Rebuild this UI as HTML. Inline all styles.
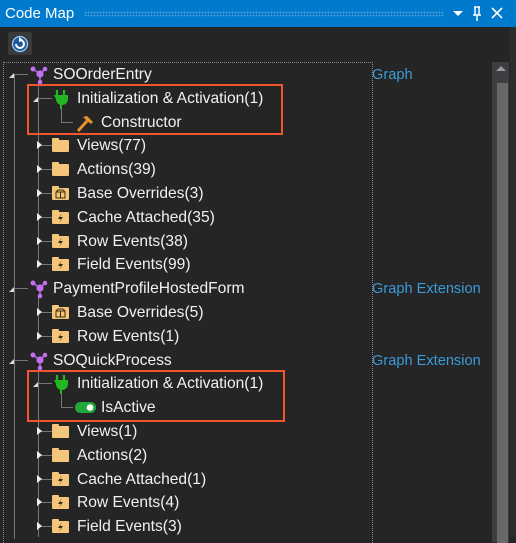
<!DOCTYPE html><html><head><style>
body{margin:0;width:516px;height:537px;background:#252526;overflow:hidden;font-family:"Liberation Sans",sans-serif;font-size:15.6px;color:#f1f1f1;position:relative}
.a{position:absolute}
.t{position:absolute;white-space:nowrap;line-height:18px}
.r{color:#3a9bd6;font-size:14.6px}
.box{position:absolute;border:2px solid #f0552f;box-sizing:border-box}
.vl{position:absolute;width:1px;background:#777}
.hl{position:absolute;height:1px;background:#777}
.tri{position:absolute;width:0;height:0;border-top:4px solid transparent;border-bottom:4px solid transparent;border-left:5px solid #eee}
.exp{position:absolute;width:0;height:0;border-left:5px solid transparent;border-bottom:5px solid #ddd}
.fold{position:absolute;width:17px;height:12px;background:#f5c67a;border-radius:1px}
.fold:before{content:"";position:absolute;left:0;top:-2px;width:7px;height:3px;background:#f5c67a;border-radius:1px 1px 0 0}
</style></head><body>
<div class="a" style="left:0;top:0;width:516px;height:27px;background:#007acc"></div>
<div class="t" style="left:5px;top:5px;font-size:15px;color:#fff">Code Map</div>
<div class="a" style="left:84px;top:11px;width:360px;height:6px;background-image:radial-gradient(#4a9ad8 1px,transparent 1px);background-size:3px 3px"></div>
<div class="a" style="left:453px;top:11px;border-left:5px solid transparent;border-right:5px solid transparent;border-top:5px solid #fff"></div>
<svg class="a" style="left:470px;top:6px" width="14" height="16"><path d="M4 1h6M5 1v8M9 1v8M3 9h8M7 9v6" stroke="#fff" stroke-width="1.5" fill="none"/></svg>
<svg class="a" style="left:491px;top:7px" width="12" height="12"><path d="M1 1L11 11M11 1L1 11" stroke="#fff" stroke-width="1.6"/></svg>
<div class="a" style="left:8px;top:32px;width:24px;height:23px;background:#3a3a3c;border-radius:2px"></div>
<svg class="a" style="left:11px;top:35px" width="18" height="18"><circle cx="9" cy="9" r="7.5" fill="#1e5a9a" stroke="#9cc8f0" stroke-width="1.3"/><path d="M5 9a4 4 0 1 0 4-4" stroke="#fff" stroke-width="2" fill="none"/><path d="M8 2l4 3-4 2z" fill="#fff"/></svg>
<div class="a" style="left:3px;top:62px;width:368px;height:480px;border-left:1px dotted #888;border-top:1px dotted #888;border-right:1px dotted #888"></div>
<div class="a" style="left:492px;top:62px;width:17px;height:480px;background:#3e3e42"></div>
<div class="a" style="left:496px;top:66px;border-left:5px solid transparent;border-right:5px solid transparent;border-bottom:5px solid #999"></div>
<div class="a" style="left:497px;top:83px;width:11px;height:460px;background:#686868"></div>
<div class="a" style="left:510px;top:27px;width:6px;height:510px;background:#2d2d30"></div>
<div class="vl" style="left:14px;top:74px;height:290px"></div>
<div class="vl" style="left:14px;top:359px;height:180px"></div>
<div class="vl" style="left:38px;top:82px;height:183px"></div>
<div class="vl" style="left:38px;top:296px;height:40px"></div>
<div class="vl" style="left:38px;top:367px;height:170px"></div>
<div class="vl" style="left:61px;top:108px;height:14px"></div><div class="hl" style="left:61px;top:122px;width:12px"></div>
<div class="vl" style="left:61px;top:393px;height:14px"></div><div class="hl" style="left:61px;top:407px;width:12px"></div>
<div class="box" style="left:27px;top:84px;width:256px;height:51px"></div>
<div class="box" style="left:27px;top:370px;width:258px;height:52px"></div>
<div id="rows"></div>
<script>
var rows=[
[0,"SOOrderEntry","g","Graph"],[1,"Initialization &amp; Activation(1)","p"],[2,"Constructor","h"],
[1,"Views(77)","f"],[1,"Actions(39)","f"],[1,"Base Overrides(3)","b"],[1,"Cache Attached(35)","l"],[1,"Row Events(38)","l"],[1,"Field Events(99)","l"],
[0,"PaymentProfileHostedForm","g","Graph Extension"],[1,"Base Overrides(5)","b"],[1,"Row Events(1)","l"],
[0,"SOQuickProcess","g","Graph Extension"],[1,"Initialization &amp; Activation(1)","p"],[2,"IsActive","s"],
[1,"Views(1)","f"],[1,"Actions(2)","f"],[1,"Cache Attached(1)","l"],[1,"Row Events(4)","l"],[1,"Field Events(3)","l"]];
var h="";
rows.forEach(function(r,i){var c=74+i*23.8;var lv=r[0],ty=r[2];
var ex=[14,38,61][lv];
if(lv<2){h+='<div class="hl" style="left:'+ex+'px;top:'+Math.round(c)+'px;width:14px"></div>';}
var open=(ty=="g"||ty=="p");
if(lv<2){ if(open) h+='<div class="exp" style="left:'+(ex-5)+'px;top:'+Math.round(c-1)+'px"></div>'; else h+='<div class="tri" style="left:'+(ex-1)+'px;top:'+Math.round(c-4)+'px"></div>';}
var ix=[29,52,75][lv], tx=[53,77,101][lv];
var top=Math.round(c-9);
if(ty=="g") h+='<svg class="a" style="left:'+ix+'px;top:'+top+'px" width="20" height="20"><path d="M4 4L11 9L16 4M11 9V17" stroke="#b35ee0" stroke-width="1.6" fill="none"/><circle cx="4" cy="4" r="2.5" fill="#c06ff0"/><circle cx="16" cy="4" r="2.3" fill="#c06ff0"/><circle cx="11" cy="17" r="2.3" fill="#c06ff0"/><circle cx="11" cy="9" r="3.6" fill="#c06ff0"/></svg>';
if(ty=="p") h+='<svg class="a" style="left:'+ix+'px;top:'+top+'px" width="18" height="20"><path d="M5 1v5M12 1v5" stroke="#22b822" stroke-width="2.2"/><path d="M2 6h14v4a6 6 0 0 1-12 0z" fill="#22b822"/><path d="M9 15v5" stroke="#22b822" stroke-width="2"/></svg>';
if(ty=="h") h+='<svg class="a" style="left:'+ix+'px;top:'+top+'px" width="20" height="20"><path d="M3 18L12 8" stroke="#e8912a" stroke-width="3"/><path d="M8 4l4-1 6 6-2 2-4-3z" fill="#e8912a"/></svg>';
if(ty=="s") h+='<svg class="a" style="left:'+ix+'px;top:'+(top+3)+'px" width="22" height="14"><rect x="0" y="1" width="21" height="11" rx="5.5" fill="#22a83a"/><circle cx="15" cy="6.5" r="3.3" fill="#fff"/></svg>';
if(ty=="f"||ty=="b"||ty=="l"){h+='<div class="fold" style="left:'+ix+'px;top:'+Math.round(c-5)+'px"></div>';
 if(ty=="l") h+='<svg class="a" style="left:'+(ix+4)+'px;top:'+Math.round(c-5)+'px" width="9" height="12"><path d="M6 1L2 7h3L3 11L7 5H4z" fill="#3a2a10"/></svg>';
 if(ty=="b") h+='<svg class="a" style="left:'+(ix+3)+'px;top:'+Math.round(c-4)+'px" width="11" height="10"><path d="M1 3h9v6H1zM1 3l2-2h5l2 2M5.5 3v6" stroke="#3a2a10" fill="none"/></svg>';}
h+='<div class="t" style="left:'+tx+'px;top:'+Math.round(c-8)+'px">'+r[1]+'</div>';
if(r[3]) h+='<div class="t r" style="left:372px;top:'+Math.round(c-8)+'px">'+r[3]+'</div>';
});
document.getElementById("rows").innerHTML=h;
</script>
</body></html>
